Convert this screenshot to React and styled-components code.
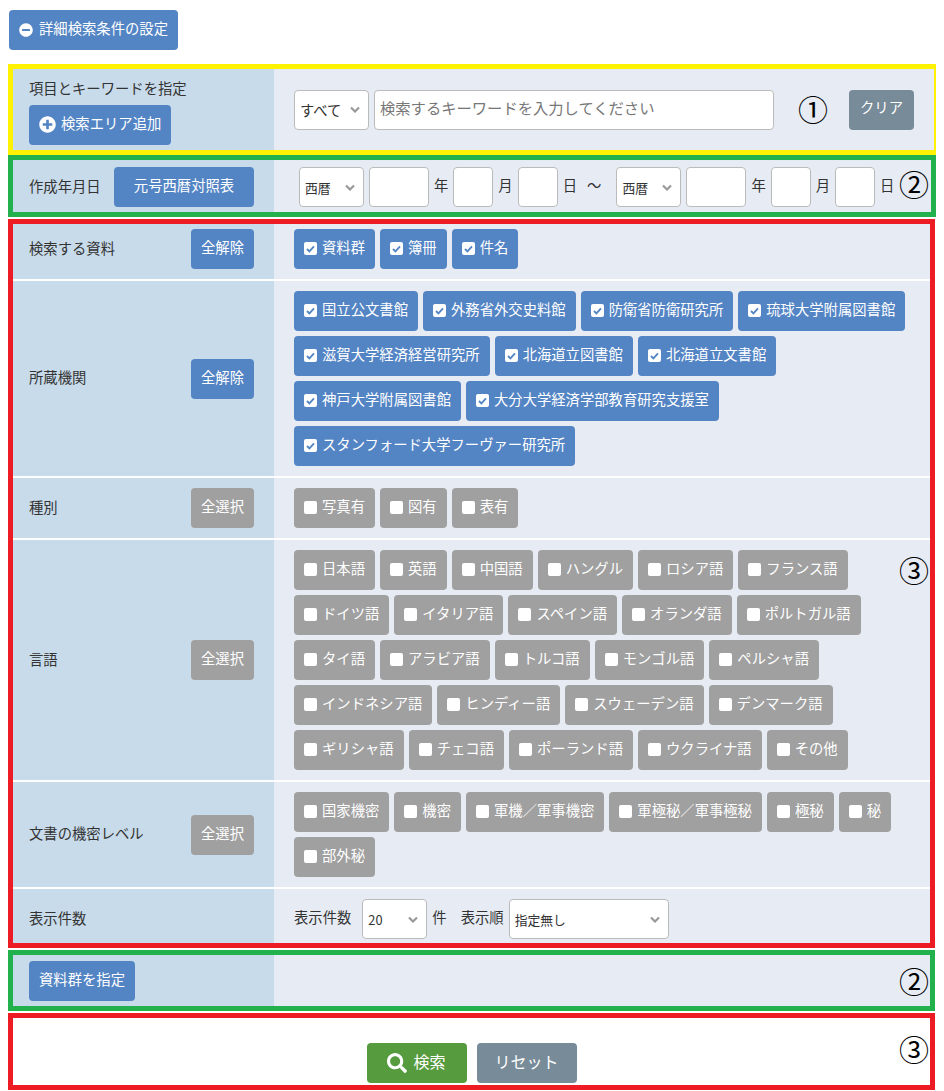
import React from "react";
import styled, { createGlobalStyle } from "styled-components";
import { FaMinusCircle, FaPlusCircle, FaSearch } from "react-icons/fa";

const GlobalStyle = createGlobalStyle`
  html, body {
    margin: 0;
    padding: 0;
    background: #fff;
    color: #333;
    font-family: "Noto Sans CJK JP", "Noto Sans", sans-serif;
    font-size: 14.33px;
  }
  * { box-sizing: border-box; }
`;

const colors = {
  blue: "#5384c4",
  gray: "#a0a0a0",
  slate: "#788b98",
  green: "#569b3e",
};

const chevron =
  "data:image/svg+xml;utf8," +
  encodeURIComponent(
    '<svg xmlns="http://www.w3.org/2000/svg" viewBox="0 0 10 7"><path d="M1 1.5l4 4 4-4" fill="none" stroke="#999" stroke-width="2.2"/></svg>'
  );

const Page = styled.div`
  width: 944px;
  height: 1091px;
  padding-top: 10px;
  overflow: hidden;
`;

const TopBar = styled.div`
  display: flex;
  padding-left: 9px;
  margin-bottom: 14px;
`;

const Button = styled.button`
  display: inline-flex;
  align-items: center;
  justify-content: center;
  gap: ${(p) => p.$gap || 0}px;
  height: 40px;
  margin-left: ${(p) => p.$left || 0}px;
  padding: 0 ${(p) => p.$pad ?? 10}px 4px;
  width: ${(p) => (p.$width ? `${p.$width}px` : "auto")};
  flex: none;
  border: 0;
  border-radius: 4px;
  background: ${(p) => colors[p.$color || "blue"]};
  color: #fff;
  font-family: inherit;
  font-size: ${(p) => p.$size || 14.33}px;
  line-height: 1;
  white-space: nowrap;

  svg { margin-top: 3px; }
`;

const Frame = styled.section`
  position: relative;
  width: ${(p) => p.$width || 927}px;
  margin-left: 8px;
  margin-bottom: ${(p) => p.$after || 0}px;
  border: 5px solid ${(p) => p.$border};
`;

const Mark = styled.span`
  position: absolute;
  top: ${(p) => p.$top}px;
  left: ${(p) => p.$left}px;
  font-size: 30px;
  line-height: 1;
  color: #000;
`;

const Row = styled.div`
  display: grid;
  grid-template-columns: 261px 1fr;
  min-height: ${(p) => p.$height || 0}px;
  border-bottom: ${(p) => (p.$last ? "0" : "2px solid #fff")};
`;

const Head = styled.div`
  display: flex;
  align-items: center;
  justify-content: space-between;
  padding: ${(p) => p.$top ?? 10}px 20px ${(p) => p.$bottom ?? 10}px 16px;
  background: #c8dbea;
  line-height: 1.2;
`;

const StackedHead = styled(Head)`
  flex-direction: column;
  align-items: flex-start;
  justify-content: flex-start;
  gap: 9px;
`;

const Title = styled.span`
  margin-bottom: 4px;
`;

const Body = styled.div`
  display: flex;
  flex-wrap: ${(p) => (p.$wrap ? "wrap" : "nowrap")};
  align-content: flex-start;
  align-items: center;
  gap: 5px;
  padding: ${(p) => p.$top ?? 10}px 20px ${(p) => p.$bottom ?? 10}px ${(p) => p.$left ?? 20}px;
  background: #e7ecf4;
`;

const Field = styled.input`
  width: ${(p) => p.$width}px;
  height: 40px;
  flex: none;
  padding: 0 5px 5px;
  border: 1px solid #bbb;
  border-radius: 4px;
  background: #fff;
  font-family: inherit;
  font-size: 15.3px;
  &::placeholder { color: #777; opacity: 1; }
`;

const Select = styled.select`
  appearance: none;
  width: ${(p) => p.$width}px;
  height: 40px;
  flex: none;
  margin-left: ${(p) => p.$left || 0}px;
  padding: 0 0 0 5px;
  border: 1px solid #bbb;
  border-radius: 4px;
  background: #fff url("${chevron}") no-repeat right 8px center / 10px 7px;
  color: #333;
  font-family: inherit;
  font-size: ${(p) => (p.$large ? 14.33 : 12.8)}px;
`;

const Unit = styled.span`
  flex: none;
  margin: ${(p) => p.$margin || "0"};
  padding-bottom: 4px;
  line-height: 1;
  white-space: nowrap;
`;

const Chip = styled.label`
  display: inline-flex;
  align-items: center;
  gap: 5px;
  height: 40px;
  padding: 0 10px 4px;
  border-radius: 4px;
  background: ${(p) => (p.$on ? colors.blue : colors.gray)};
  color: #fff;
  line-height: 1;
  white-space: nowrap;
`;

const Tick = styled.span`
  display: inline-flex;
  align-items: center;
  justify-content: center;
  width: 13px;
  height: 13px;
  flex: none;
  margin-top: 3px;
  border-radius: 2px;
  background: #fff;
`;

const Footer = styled.div`
  display: flex;
  justify-content: center;
  gap: 10px;
  height: 67px;
  padding-top: 25px;
`;

const collections = ["資料群", "簿冊", "件名"];
const holders = [
  "国立公文書館", "外務省外交史料館", "防衛省防衛研究所", "琉球大学附属図書館",
  "滋賀大学経済経営研究所", "北海道立図書館", "北海道立文書館",
  "神戸大学附属図書館", "大分大学経済学部教育研究支援室",
  "スタンフォード大学フーヴァー研究所",
];
const kinds = ["写真有", "図有", "表有"];
const languages = [
  "日本語", "英語", "中国語", "ハングル", "ロシア語", "フランス語",
  "ドイツ語", "イタリア語", "スペイン語", "オランダ語", "ポルトガル語",
  "タイ語", "アラビア語", "トルコ語", "モンゴル語", "ペルシャ語",
  "インドネシア語", "ヒンディー語", "スウェーデン語", "デンマーク語",
  "ギリシャ語", "チェコ語", "ポーランド語", "ウクライナ語", "その他",
];
const secrecy = ["国家機密", "機密", "軍機／軍事機密", "軍極秘／軍事極秘", "極秘", "秘", "部外秘"];

function Chips({ items, on }) {
  return items.map((name) => (
    <Chip key={name} $on={on}>
      <Tick>
        {on && (
          <svg width="9" height="8" viewBox="0 0 9 8">
            <path d="M1 4l2.4 2.4L8 1.4" fill="none" stroke={colors.blue} strokeWidth="1.8" />
          </svg>
        )}
      </Tick>
      {name}
    </Chip>
  ));
}

function DateRange() {
  return (
    <>
      <Select $width={65}><option>西暦</option></Select>
      <Field $width={60} />
      <Unit>年</Unit>
      <Field $width={40} />
      <Unit>月</Unit>
      <Field $width={40} />
      <Unit>日</Unit>
    </>
  );
}

function ChipRow({ title, action, on, items, top, last }) {
  return (
    <Row $last={last}>
      <Head $top={top}>
        <Title>{title}</Title>
        <Button $color={on ? "blue" : "gray"}>{action}</Button>
      </Head>
      <Body $wrap $top={top}>
        <Chips items={items} on={on} />
      </Body>
    </Row>
  );
}

export default function App() {
  return (
    <Page>
      <GlobalStyle />
      <TopBar>
        <Button $gap={6}>
          <FaMinusCircle size={14} />
          詳細検索条件の設定
        </Button>
      </TopBar>

      <Frame $border="#fff200" $width={928}>
        <Row $last $height={81}>
          <StackedHead $top={10} $bottom={5}>
            項目とキーワードを指定
            <Button $gap={5}>
              <FaPlusCircle size={17} />
              検索エリア追加
            </Button>
          </StackedHead>
          <Body>
            <Select $width={75} $large><option>すべて</option></Select>
            <Field $width={400} placeholder="検索するキーワードを入力してください" />
            <Button $color="slate" $width={65} $pad={0} $left={70}>クリア</Button>
          </Body>
        </Row>
        <Mark $top={24} $left={785}>①</Mark>
      </Frame>

      <Frame $border="#22b14c" $width={928} $after={2}>
        <Row $last $height={52}>
          <Head $top={7} $bottom={5}>
            <Title>作成年月日</Title>
            <Button $width={140}>元号西暦対照表</Button>
          </Head>
          <Body $top={7} $bottom={5} $left={25}>
            <DateRange />
            <Unit $margin="0 10px 0 5px">～</Unit>
            <DateRange />
          </Body>
        </Row>
        <Mark $top={8} $left={886}>②</Mark>
      </Frame>

      <Frame $border="#ed1c24" $after={2}>
        <ChipRow title="検索する資料" action="全解除" on items={collections} top={5} />
        <ChipRow title="所蔵機関" action="全解除" on items={holders} />
        <ChipRow title="種別" action="全選択" items={kinds} />
        <ChipRow title="言語" action="全選択" items={languages} />
        <ChipRow title="文書の機密レベル" action="全選択" items={secrecy} />
        <Row $last $height={54}>
          <Head $bottom={4}><Title>表示件数</Title></Head>
          <Body $bottom={4}>
            <Unit>表示件数</Unit>
            <Select $width={65} $left={6}><option>20</option></Select>
            <Unit>件</Unit>
            <Unit $margin="0 0 0 9px">表示順</Unit>
            <Select $width={160}><option>指定無し</option></Select>
          </Body>
        </Row>
        <Mark $top={330} $left={886}>③</Mark>
      </Frame>

      <Frame $border="#22b14c" $after={2}>
        <Row $last $height={51}>
          <Head $top={6} $bottom={5}>
            <Button>資料群を指定</Button>
          </Head>
          <Body />
        </Row>
        <Mark $top={10} $left={886}>②</Mark>
      </Frame>

      <Frame $border="#ed1c24">
        <Footer>
          <Button $color="green" $width={100} $size={16} $gap={6}>
            <FaSearch size={20} />
            検索
          </Button>
          <Button $color="slate" $width={100} $size={16}>リセット</Button>
        </Footer>
        <Mark $top={15} $left={886}>③</Mark>
      </Frame>
    </Page>
  );
}
